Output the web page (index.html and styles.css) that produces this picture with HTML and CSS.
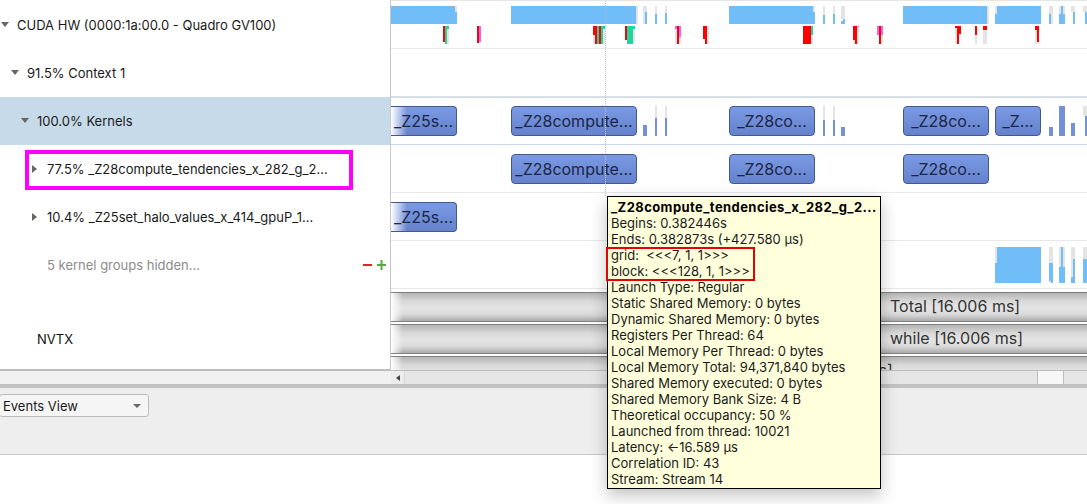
FILE: index.html
```html
<!DOCTYPE html>
<html lang="en">
<head>
    <meta charset="UTF-8">
    <meta name="viewport" content="width=device-width, initial-scale=1.0">
    <title>Timeline View</title>
    <link rel="stylesheet" href="styles.css">
</head>
<body>

<!-- Tree and timeline -->
<div class="main">
    <div class="tree">
        <div class="tree-row depth-0"><span class="twist open"></span>CUDA HW (0000:1a:00.0 - Quadro GV100)</div>
        <div class="tree-row depth-1"><span class="twist open"></span>91.5% Context 1</div>
        <div class="tree-row depth-2 selected"><span class="twist open"></span>100.0% Kernels</div>
        <div class="tree-row depth-3"><span class="twist closed"></span>77.5% _Z28compute_tendencies_x_282_g_2...</div>
        <div class="tree-row depth-3"><span class="twist closed"></span>10.4% _Z25set_halo_values_x_414_gpuP_1...</div>
        <div class="tree-row depth-3 hidden-groups">
            <span class="twist"></span>5 kernel groups hidden...
            <svg class="group-btns" width="24" height="10" viewBox="0 0 24 10">
                <rect x="0" y="4" width="9" height="2" fill="#e3202a"/>
                <rect x="14" y="4" width="9" height="2" fill="#4caf3e"/>
                <rect x="17.500" y="0" width="2" height="10" fill="#4caf3e"/>
            </svg>
        </div>
        <div class="tree-row depth-2 nvtx"><span class="twist"></span>NVTX</div>
        <div class="row-mark"></div>
    </div>

    <div class="timeline">
        <!-- Activity, y in page coordinates -->
        <div class="track">
            <svg class="ticks" viewBox="391 1 696 48">
                <g class="idle">
                    <rect x="455" y="6" width="2" height="6"/><rect x="636" y="6" width="2" height="18"/>
                    <rect x="643" y="6" width="4" height="18"/><rect x="655" y="6" width="2" height="8"/><rect x="665" y="6" width="2" height="7"/>
                    <rect x="813" y="6" width="2" height="6"/><rect x="823" y="6" width="2" height="9"/><rect x="833" y="6" width="2" height="8"/><rect x="841" y="6" width="4" height="13"/>
                    <rect x="987" y="6" width="2" height="18"/><rect x="995" y="6" width="2" height="8"/>
                    <rect x="1049" y="6" width="4" height="18"/><rect x="1059" y="6" width="6" height="10"/><rect x="1071" y="6" width="4" height="6"/><rect x="1083" y="6" width="4" height="6"/>
                    <rect x="447" y="29" width="2" height="15"/><rect x="593" y="35" width="2" height="9"/><rect x="603" y="29" width="2" height="15"/><rect x="633" y="29" width="2" height="15"/>
                    <rect x="675" y="29" width="2" height="15"/><rect x="679" y="37" width="2" height="7"/><rect x="705" y="39" width="2" height="5"/><rect x="707" y="26" width="2" height="18"/>
                    <rect x="811" y="35" width="2" height="9"/><rect x="853" y="40" width="2" height="4"/><rect x="857" y="26" width="2" height="18"/><rect x="881" y="35" width="2" height="9"/>
                    <rect x="955" y="26" width="2" height="18"/><rect x="975" y="35" width="2" height="9"/><rect x="983" y="30" width="4" height="14"/><rect x="1035" y="30" width="4" height="14"/>
                </g>
                <g class="busy">
                    <rect x="391" y="6" width="64" height="18"/><rect x="455" y="12" width="2" height="12"/>
                    <rect x="511" y="6" width="125" height="18"/><rect x="645" y="12" width="2" height="12"/><rect x="655" y="14" width="2" height="10"/><rect x="665" y="13" width="2" height="11"/>
                    <rect x="729" y="6" width="84" height="18"/><rect x="813" y="12" width="2" height="12"/><rect x="823" y="15" width="2" height="9"/><rect x="833" y="14" width="2" height="10"/><rect x="841" y="21" width="4" height="3"/><rect x="843" y="19" width="2" height="5"/>
                    <rect x="903" y="6" width="84" height="18"/><rect x="995" y="14" width="2" height="10"/><rect x="997" y="6" width="44" height="18"/>
                    <rect x="1049" y="14" width="2" height="10"/><rect x="1059" y="14" width="6" height="10"/><rect x="1061" y="6" width="2" height="8"/><rect x="1073" y="12" width="2" height="12"/><rect x="1085" y="12" width="2" height="12"/>
                </g>
                <g class="copy">
                    <rect x="445" y="26" width="4" height="3"/><rect x="445" y="29" width="2" height="15"/><rect x="597" y="26" width="2" height="18"/><rect x="601" y="26" width="4" height="3"/><rect x="601" y="29" width="2" height="15"/>
                    <rect x="627" y="26" width="6" height="18"/><rect x="633" y="26" width="2" height="3"/><rect x="811" y="26" width="2" height="9"/>
                </g>
                <g class="sync">
                    <rect x="443" y="26" width="2" height="16"/><rect x="477" y="26" width="2" height="17"/><rect x="593" y="26" width="2" height="9"/><rect x="595" y="26" width="2" height="18"/><rect x="599" y="26" width="2" height="18"/>
                    <rect x="625" y="26" width="2" height="14"/><rect x="677" y="26" width="2" height="18"/><rect x="703" y="26" width="4" height="13"/><rect x="705" y="39" width="2" height="5"/>
                    <rect x="803" y="26" width="8" height="18"/><rect x="853" y="26" width="4" height="14"/><rect x="855" y="40" width="2" height="4"/><rect x="879" y="26" width="2" height="18"/>
                    <rect x="955" y="26" width="6" height="2"/><rect x="957" y="28" width="2" height="16"/><rect x="959" y="28" width="2" height="6"/><rect x="975" y="26" width="2" height="9"/><rect x="983" y="26" width="4" height="4"/>
                    <rect x="1035" y="26" width="4" height="4"/><rect x="1037" y="30" width="2" height="12"/>
                </g>
                <g class="marker">
                    <rect x="479" y="26" width="2" height="16"/><rect x="675" y="26" width="2" height="3"/><rect x="679" y="26" width="2" height="11"/>
                    <rect x="857" y="26" width="2" height="1"/><rect x="877" y="26" width="2" height="9"/><rect x="881" y="26" width="2" height="9"/>
                </g>
            </svg>
        </div>
        <div class="track"></div>
        <div class="track blue-line">
            <div class="kernel faded" style="left: 0; width: 66px;">_Z25s...</div>
            <div class="kernel" style="left: 120px; width: 126px;">_Z28compute...</div>
            <div class="kernel" style="left: 338px; width: 86px;">_Z28co...</div>
            <div class="kernel" style="left: 512px; width: 86px;">_Z28co...</div>
            <div class="kernel" style="left: 604px; width: 46px;">_Z...</div>
            <svg class="ticks" viewBox="391 97 696 48">
                <g class="idle">
                    <rect x="655" y="106" width="2" height="12"/><rect x="665" y="106" width="2" height="12"/><rect x="823" y="106" width="2" height="14"/><rect x="833" y="106" width="2" height="14"/><rect x="1083" y="106" width="4" height="10"/>
                </g>
                <g class="kernel-tick">
                    <rect x="643" y="125" width="4" height="11"/><rect x="655" y="118" width="2" height="18"/><rect x="665" y="118" width="2" height="18"/>
                    <rect x="823" y="120" width="2" height="16"/><rect x="833" y="120" width="2" height="16"/><rect x="841" y="127" width="4" height="9"/>
                    <rect x="1049" y="127" width="4" height="9"/><rect x="1059" y="106" width="6" height="30"/><rect x="1071" y="123" width="4" height="13"/><rect x="1085" y="116" width="2" height="20"/>
                </g>
            </svg>
        </div>
        <div class="track">
            <div class="kernel" style="left: 120px; width: 126px;">_Z28compute...</div>
            <div class="kernel" style="left: 338px; width: 86px;">_Z28co...</div>
            <div class="kernel" style="left: 512px; width: 86px;">_Z28co...</div>
        </div>
        <div class="track">
            <div class="kernel faded" style="left: 0; width: 66px;">_Z25s...</div>
        </div>
        <div class="track">
            <svg class="ticks" viewBox="391 241 696 48">
                <g class="idle">
                    <rect x="995" y="247" width="2" height="16"/><rect x="1049" y="247" width="4" height="36"/><rect x="1059" y="247" width="6" height="20"/><rect x="1071" y="247" width="4" height="36"/><rect x="1083" y="247" width="4" height="36"/>
                </g>
                <g class="busy">
                    <rect x="995" y="263" width="2" height="20"/><rect x="997" y="247" width="44" height="36"/>
                    <rect x="1049" y="263" width="4" height="18"/><rect x="1051" y="281" width="2" height="2"/><rect x="1059" y="267" width="6" height="16"/><rect x="1061" y="247" width="2" height="20"/>
                    <rect x="1071" y="277" width="4" height="6"/><rect x="1073" y="259" width="2" height="24"/><rect x="1083" y="259" width="4" height="24"/>
                </g>
            </svg>
        </div>
        <div class="range-bars">
            <div class="range-bar"><span>Total [16.006 ms]</span></div>
            <div class="range-bar"><span>while [16.006 ms]</span></div>
            <div class="range-bar"><span class="clipped">[16.006 ms]</span></div>
        </div>
        <div class="cursor-line"></div>
    </div>
</div>

<!-- Horizontal scroll -->
<div class="hscroll">
    <div class="hscroll-left"></div>
    <div class="hscroll-track">
        <div class="hscroll-arrow"><span></span></div>
        <div class="hscroll-thumb"></div>
    </div>
</div>
<div class="splitter"></div>

<!-- Bottom pane -->
<div class="bottom-pane">
    <div class="combo">Events View<span class="combo-arrow"></span></div>
</div>

<!-- Kernel tooltip -->
<div class="tooltip">
    <div class="tip-title">_Z28compute_tendencies_x_282_g_2...</div>
    <div>Begins: 0.382446s</div>
    <div>Ends: 0.382873s (+427.580 µs)</div>
    <div>grid:&nbsp; &lt;&lt;&lt;7, 1, 1&gt;&gt;&gt;</div>
    <div>block: &lt;&lt;&lt;128, 1, 1&gt;&gt;&gt;</div>
    <div>Launch Type: Regular</div>
    <div>Static Shared Memory: 0 bytes</div>
    <div>Dynamic Shared Memory: 0 bytes</div>
    <div>Registers Per Thread: 64</div>
    <div>Local Memory Per Thread: 0 bytes</div>
    <div>Local Memory Total: 94,371,840 bytes</div>
    <div>Shared Memory executed: 0 bytes</div>
    <div>Shared Memory Bank Size: 4 B</div>
    <div>Theoretical occupancy: 50 %</div>
    <div>Launched from thread: 10021</div>
    <div>Latency: ←16.589 µs</div>
    <div>Correlation ID: 43</div>
    <div>Stream: Stream 14</div>
    <div class="tip-mark"></div>
</div>

</body>
</html>
```

FILE: styles.css
```css
/* Page */
html, body {
    margin: 0;
    height: 100%;
    overflow: hidden;
    background-color: #fff;
}

body {
    position: relative;
    font-family: "Inter", "Liberation Sans", sans-serif;
    font-size: 13px;
    color: #1a1a1a;
}

.main {
    display: flex;
    height: 370px;
    overflow: hidden;
}

/* Tree on the left */
.tree {
    position: relative;
    width: 390px;
    flex-shrink: 0;
    padding-top: 1px;
    box-sizing: border-box;
    overflow: hidden;
}

.tree-row {
    display: flex;
    align-items: center;
    height: 48px;
    white-space: nowrap;
}

.depth-0 { padding-left: 1px; }
.depth-1 { padding-left: 11px; }
.depth-2 { padding-left: 21px; }
.depth-3 { padding-left: 31px; }

.selected {
    background-color: #c6daea;
}

.hidden-groups {
    color: #8c8c8c;
}

.group-btns {
    margin-left: auto;
    margin-right: 3px;
}

.nvtx {
    height: 100px;
    color: #111;
}

.twist {
    flex: 0 0 16px;
    height: 0;
}

.twist.open::before {
    content: "";
    display: block;
    width: 0;
    margin-top: -3px;
    border-left: 4px solid transparent;
    border-right: 4px solid transparent;
    border-top: 5px solid #666;
}

.twist.closed::before {
    content: "";
    display: block;
    width: 0;
    margin-top: -4px;
    margin-left: 1px;
    border-top: 4px solid transparent;
    border-bottom: 4px solid transparent;
    border-left: 5px solid #666;
}

.row-mark {
    position: absolute;
    left: 25px;
    top: 150px;
    width: 328px;
    height: 40px;
    box-sizing: border-box;
    border: 4px solid #ff00ff;
}

/* Timeline on the right */
.timeline {
    position: relative;
    flex: 1;
    padding-top: 1px;
    padding-left: 0;
    box-sizing: border-box;
    border-left: 1px solid #c8c8c8;
    border-top: 0;
    overflow: hidden;
    box-shadow: inset 0 1px 0 #e6e6e6;
}

.track {
    position: relative;
    height: 48px;
    box-sizing: border-box;
    border-bottom: 1px solid #e8e8e8;
}

.blue-line {
    height: 49px;
    margin-top: -1px;
    border-top: 2px solid #d6dfe6;
    border-bottom: 1px solid #c9d8e4;
}

.ticks {
    position: absolute;
    left: 0;
    top: 0;
    width: 696px;
    height: 48px;
    shape-rendering: crispEdges;
}

.blue-line .ticks {
    top: -1px;
}

.busy { fill: #70bdf8; }
.idle { fill: #e4e4e4; }
.copy { fill: #1fd6a0; }
.sync { fill: #ff0000; }
.marker { fill: #e668f2; }
.kernel-tick { fill: #7490d8; }

.kernel {
    position: absolute;
    top: 9px;
    height: 30px;
    box-sizing: border-box;
    border: 1px solid #42588f;
    border-radius: 4px;
    background: linear-gradient(#7b9ae4, #6582cc);
    color: #1c2545;
    font-size: 16px;
    line-height: 28px;
    text-align: center;
    white-space: nowrap;
    overflow: hidden;
}

.blue-line .kernel {
    top: 8px;
}

.kernel.faded {
    border-left: 0;
    border-radius: 0 4px 4px 0;
    background: linear-gradient(to right, #fff, rgba(255, 255, 255, 0) 16px), linear-gradient(#7b9ae4, #6582cc);
}

.range-bars {
    display: flex;
    flex-direction: column;
    gap: 2px;
    padding-top: 3px;
}

.range-bar {
    flex-shrink: 0;
    height: 30px;
    box-sizing: border-box;
    padding-left: 499px;
    border-top: 1px solid #808080;
    border-bottom: 1px solid #808080;
    background: linear-gradient(to right, #fff, rgba(255, 255, 255, 0) 12px), linear-gradient(#b4b4b4, #dadada 30%, #e4e4e4 55%, #d8d8d8 78%, #aaaaaa);
    color: #333;
    font-size: 16px;
    line-height: 27px;
    white-space: nowrap;
}

.range-bar .clipped {
    margin-left: -86px;
}

.cursor-line {
    position: absolute;
    left: 214px;
    top: 1px;
    height: 195px;
    border-left: 1px dotted #c0c0c0;
}

/* Scroll bar and splitter */
.hscroll {
    display: flex;
    height: 13px;
    background-color: #f0f0f0;
    border-top: 2px solid #bdbdbd;
    margin-top: -1px;
}

.hscroll-left {
    width: 391px;
    flex-shrink: 0;
}

.hscroll-track {
    position: relative;
    flex: 1;
    background-color: #e6e6e6;
}

.hscroll-arrow {
    width: 13px;
    height: 100%;
    display: flex;
    align-items: center;
    justify-content: center;
    background-color: #ececec;
    border-right: 1px solid #d8d8d8;
}

.hscroll-arrow span {
    width: 0;
    border-top: 3px solid transparent;
    border-bottom: 3px solid transparent;
    border-right: 4px solid #444;
}

.hscroll-thumb {
    position: absolute;
    left: 646px;
    top: 0;
    width: 25px;
    height: 100%;
    background-color: #f7f7f7;
    border-left: 1px solid #bdbdbd;
    border-right: 1px solid #bdbdbd;
}

.splitter {
    height: 4px;
    background-color: #c2c2c2;
}

/* Bottom pane */
.bottom-pane {
    height: 67px;
    padding-top: 6px;
    box-sizing: border-box;
    background-color: #eeeeee;
    border-bottom: 1px solid #c8c8c8;
}

.combo {
    display: flex;
    align-items: center;
    justify-content: space-between;
    width: 150px;
    height: 23px;
    margin-left: -1px;
    padding: 0 7px 0 3px;
    box-sizing: border-box;
    border: 1px solid #bcbcbc;
    border-radius: 3px;
    background-color: #f5f5f5;
}

.combo-arrow {
    width: 0;
    border-left: 4px solid transparent;
    border-right: 4px solid transparent;
    border-top: 4px solid #666;
}

/* Tooltip */
.tooltip {
    position: absolute;
    left: 607px;
    top: 196px;
    width: 274px;
    box-sizing: border-box;
    padding: 2px 3px 1px;
    border: 1px solid #000;
    background-color: #ffffdc;
    color: #1a1a1a;
    line-height: 16px;
    white-space: nowrap;
    box-shadow: 0 6px 16px rgba(0, 0, 0, 0.25);
}

.tip-title {
    font-weight: bold;
    letter-spacing: 0.420px;
    color: #000;
}

.tip-mark {
    position: absolute;
    left: -2px;
    top: 50px;
    width: 149px;
    height: 34px;
    box-sizing: border-box;
    border: 2px solid #e60000;
}
```
